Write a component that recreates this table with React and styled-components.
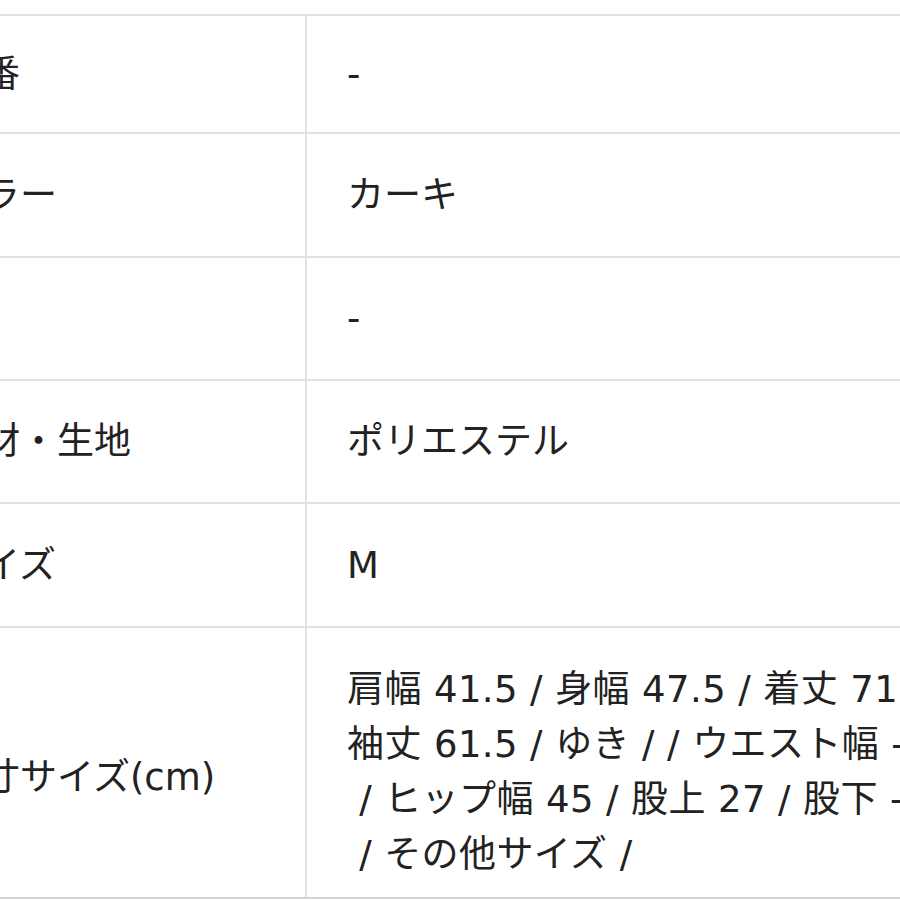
import React from 'react';
import styled, { createGlobalStyle } from 'styled-components';

const GlobalStyle = createGlobalStyle`
  html, body {
    margin: 0;
    padding: 0;
    background: #ffffff;
    overflow: hidden;
  }
  body {
    font-family: "DejaVu Sans", "Noto Sans CJK JP", sans-serif;
    color: #222222;
  }
`

const Page = styled.div`
  width: 900px;
  height: 900px;
  overflow: hidden;
  background: #ffffff;
`
const Table = styled.div`
  margin: 14px 0 0 -94px;
  width: 1150px;
  border-bottom: 2px solid #d4d4d4;
`
const Row = styled.div`
  display: grid;
  grid-template-columns: 399px 1fr;
  border-top: 2px solid #e2e2e2;
  min-height: ${props => props.$h}px;
`
const Label = styled.div`
  display: flex;
  align-items: center;
  padding: ${props => props.$multi ? '29px 40px 0' : '0 40px'};
  font-size: 37px;
  line-height: 55px;
  white-space: nowrap;
`
const Value = styled.div`
  display: flex;
  flex-direction: column;
  justify-content: center;
  padding: ${props => props.$multi ? '34px 40px 15px' : '0 40px'};
  border-left: 2px solid #e2e2e2;
  font-size: 37px;
  line-height: 55px;
  letter-spacing: ${props => props.$multi ? '0.4px' : '0'};
`
const Line = styled.div`
  white-space: pre;
`

const rows = [
  { label: '品番', value: ['-'], h: 116 },
  { label: 'カラー', value: ['カーキ'], h: 122 },
  { label: '柄', value: ['-'], h: 121 },
  { label: '素材・生地', value: ['ポリエステル'], h: 121 },
  { label: 'サイズ', value: ['M'], h: 122 },
  {
    label: '実寸サイズ(cm)',
    value: [
      '肩幅 41.5 / 身幅 47.5 / 着丈 71.5 /',
      '袖丈 61.5 / ゆき / / ウエスト幅 -',
      ' / ヒップ幅 45 / 股上 27 / 股下 -',
      ' / その他サイズ /',
    ],
    h: 269,
  },
];

const App = () => {
  return (
    <Page>
      <GlobalStyle />
      <Table>
        {rows.map(row => {
          const multi = row.value.length > 1;
          return (
            <Row key={row.label} $h={row.h}>
              <Label $multi={multi}>{row.label}</Label>
              <Value $multi={multi}>
                {row.value.map((line, i) => (
                  <Line key={i}>{line}</Line>
                ))}
              </Value>
            </Row>
          );
        })}
      </Table>
    </Page>
  );
}

export default App;
